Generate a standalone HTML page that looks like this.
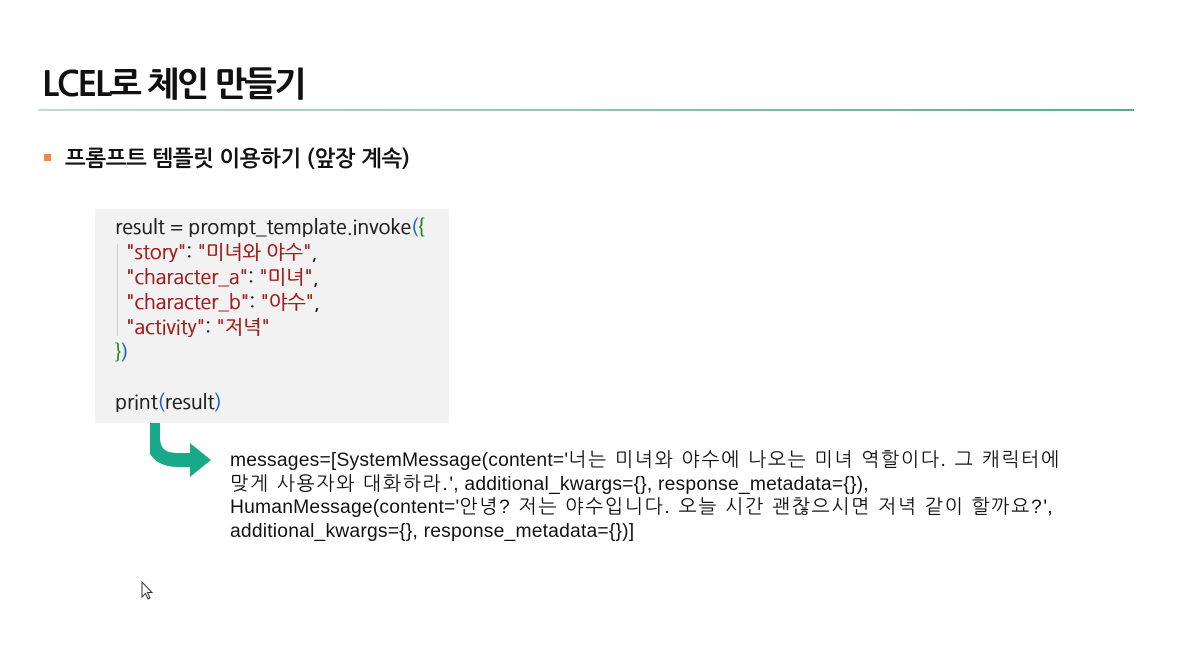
<!DOCTYPE html>
<html><head><meta charset="utf-8"><style>
body{margin:0;width:1177px;height:661px;background:#fff;position:relative;overflow:hidden;font-family:"Liberation Sans","NanumGothic","Noto Sans CJK KR",sans-serif}
.t{position:absolute;left:42px;top:68px;font-size:34px;font-weight:bold;color:#111;letter-spacing:-2px;font-family:"NanumGothic","Noto Sans CJK KR",sans-serif;text-shadow:0.6px 0 0 #111}
.line{position:absolute;left:38px;top:109px;width:1096px;height:2px;background:linear-gradient(90deg,#c8d8d4,#8fc4b8 50%,#5aa894)}
.b{position:absolute;left:44px;top:154px;width:7px;height:7px;background:#f08a3c}
.s{position:absolute;left:65px;top:148px;font-size:22px;font-weight:bold;color:#111;font-family:"NanumGothic","Noto Sans CJK KR",sans-serif;letter-spacing:-0.3px}
.code{position:absolute;left:95px;top:209px;width:354px;height:214px;background:#f2f2f2}
.code pre{margin:0;position:absolute;left:20px;top:6px;font-family:"NanumGothic","Noto Sans CJK KR",sans-serif;font-size:19.5px;line-height:25px;color:#222;text-shadow:0.4px 0 0 currentColor}
.r{color:#a11f1f}.bl{color:#1f5fd0}.g{color:#2a8a2a}
.vl{position:absolute;left:117px;top:244px;width:1px;height:92px;background:#ccc}
.out{position:absolute;left:230px;top:449px;font-size:19.3px;line-height:23.7px;color:#111;font-family:"Liberation Sans","NanumGothic",sans-serif;letter-spacing:0.2px;white-space:nowrap}
.k{letter-spacing:1.7px}
</style></head><body>
<div class="t">LCEL로 체인 만들기</div>
<div class="line"></div>
<div class="b"></div>
<div class="s">프롬프트 템플릿 이용하기 (앞장 계속)</div>
<div class="code"><pre>result = prompt_template.invoke<span class="bl">(</span><span class="g">{</span>
  <span class="r">"story"</span>: <span class="r">"미녀와 야수"</span>,
  <span class="r">"character_a"</span>: <span class="r">"미녀"</span>,
  <span class="r">"character_b"</span>: <span class="r">"야수"</span>,
  <span class="r">"activity"</span>: <span class="r">"저녁"</span>
<span class="g">}</span><span class="bl">)</span>

print<span class="bl">(</span>result<span class="bl">)</span></pre></div>
<div class="vl"></div>
<svg style="position:absolute;left:150px;top:423px" width="65" height="56" viewBox="0 0 65 56">
<path d="M3 0 V14 Q3 37 28 37 H42" fill="none" stroke="#18a88a" stroke-width="14"/>
<path d="M40 20 L61 37 L40 54 Z" fill="#18a88a"/>
</svg>
<div class="out">messages=[SystemMessage(content='<span class="k">너는 미녀와 야수에 나오는 미녀 역할이다. 그 캐릭터에</span><br><span class="k">맞게 사용자와 대화하라.</span>', additional_kwargs={}, response_metadata={}),<br>HumanMessage(content='<span class="k">안녕? 저는 야수입니다. 오늘 시간 괜찮으시면 저녁 같이 할까요?</span>',<br>additional_kwargs={}, response_metadata={})]</div>
<svg style="position:absolute;left:141px;top:581px" width="14" height="20" viewBox="0 0 14 20"><path d="M1 1 V16 L4.5 12.5 L7 18 L9 17 L6.5 11.5 H11 Z" fill="#fff" stroke="#333" stroke-width="1"/></svg>
</body></html>
